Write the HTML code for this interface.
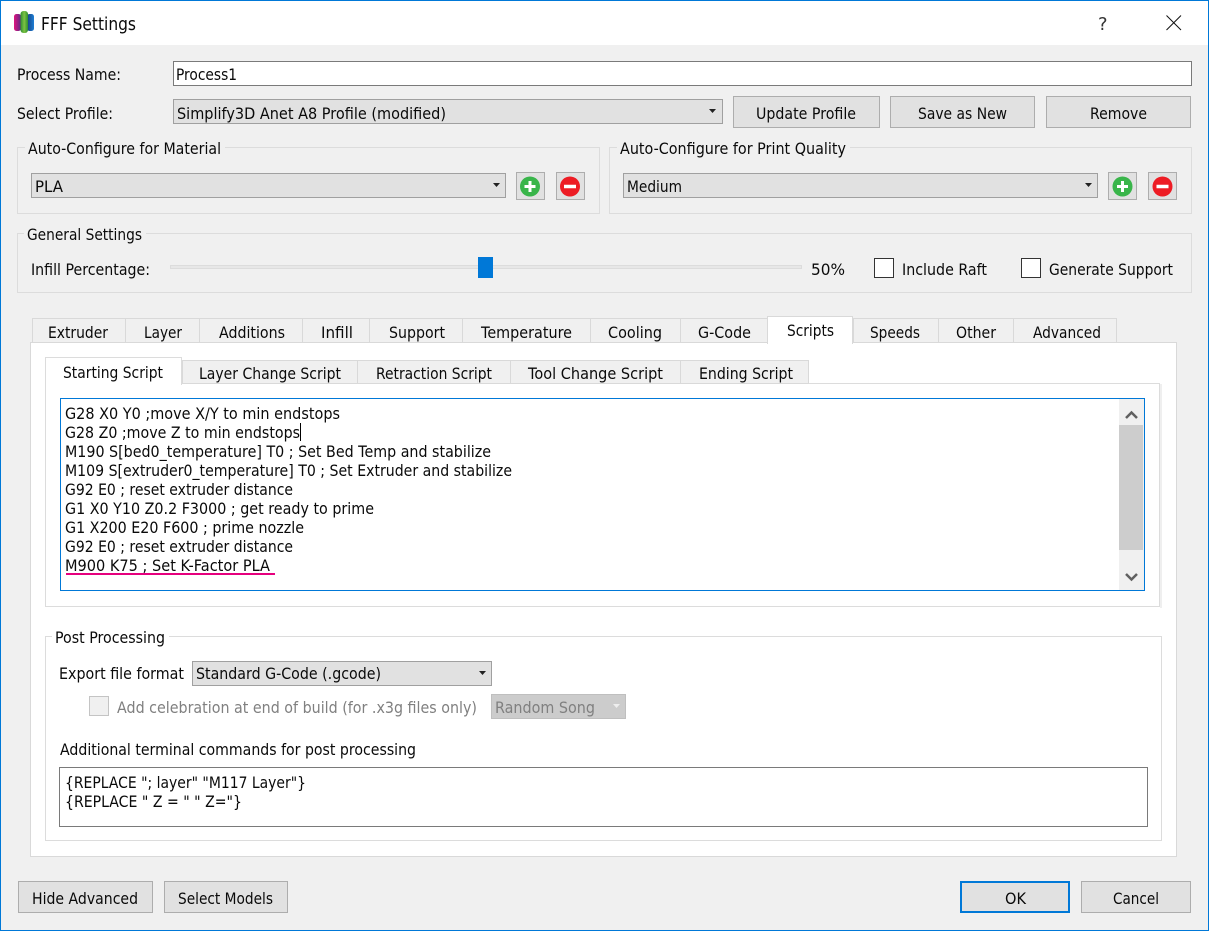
<!DOCTYPE html>
<html><head><meta charset="utf-8"><title>FFF Settings</title>
<style>
html,body{margin:0;padding:0;background:#f0f0f0;width:1209px;height:931px;overflow:hidden}
svg{display:block}
text{font-family:"DejaVu Sans","Liberation Sans",sans-serif;font-size:16px;fill:#0a0a0a;transform:translateY(1px)}
text.n{transform:none}
.b{fill:#e1e1e1;stroke:#adadad}
.c{fill:#e1e1e1;stroke:#a0a0a0}
.g{fill:none;stroke:#dcdcdc}
.t{fill:#f0f0f0;stroke:#d9d9d9}
.d{fill:#808080}
.r{shape-rendering:crispEdges}
</style></head><body>
<svg xmlns="http://www.w3.org/2000/svg" width="1209" height="931" viewBox="0 0 1209 931">
<defs>
<linearGradient id="lm" x1="0" x2="1" y1="0" y2="0"><stop offset="0" stop-color="#e0147f"/><stop offset="1" stop-color="#5b2a86"/></linearGradient>
<linearGradient id="lg" x1="0" x2="1" y1="0" y2="0"><stop offset="0" stop-color="#2f8f2f"/><stop offset=".5" stop-color="#7cc243"/><stop offset="1" stop-color="#2f8f2f"/></linearGradient>
<linearGradient id="lb" x1="0" x2="1" y1="0" y2="0"><stop offset="0" stop-color="#17407f"/><stop offset="1" stop-color="#1e7fd6"/></linearGradient>
</defs>
<rect width="1209" height="931" fill="#f0f0f0"/>
<rect width="1209" height="45" fill="#fff"/>
<rect x="0.500" y="0.500" width="1208" height="930" fill="none" stroke="#0078d7"/>
<!-- logo -->
<rect x="14" y="14" width="7" height="17" rx="2.500" fill="url(#lm)"/>
<rect x="27" y="14" width="7" height="17" rx="2.500" fill="url(#lb)"/>
<rect x="20.500" y="11" width="7.500" height="22" rx="3" fill="url(#lg)"/>
<text class="n" x="41" y="30" style="font-size:18px" textLength="95" lengthAdjust="spacingAndGlyphs">FFF Settings</text>
<text class="n" x="1098" y="30" style="font-size:18px;fill:#333">?</text>
<path d="M1166.500 15.500L1181 30M1181 15.500L1166.500 30" stroke="#111" stroke-width="1" fill="none"/>

<!-- top rows -->
<text x="17" y="79" textLength="104" lengthAdjust="spacingAndGlyphs">Process Name:</text>
<rect class="r" x="173.500" y="61.500" width="1018" height="24" fill="#fff" stroke="#7a7a7a"/>
<text x="176" y="79" textLength="61" lengthAdjust="spacingAndGlyphs">Process1</text>
<text x="17" y="118" textLength="96" lengthAdjust="spacingAndGlyphs">Select Profile:</text>
<rect class="c r" x="173.500" y="99.500" width="549" height="24"/>
<text x="177" y="118" textLength="269" lengthAdjust="spacingAndGlyphs">Simplify3D Anet A8 Profile (modified)</text>
<path d="M709 109h7l-3.500 4z" fill="#222"/>
<rect class="b r" x="733.500" y="96.500" width="146" height="31"/>
<text x="756" y="118" textLength="100" lengthAdjust="spacingAndGlyphs">Update Profile</text>
<rect class="b r" x="890.500" y="96.500" width="144" height="31"/>
<text x="918" y="118" textLength="89" lengthAdjust="spacingAndGlyphs">Save as New</text>
<rect class="b r" x="1046.500" y="96.500" width="144" height="31"/>
<text x="1090" y="118" textLength="57" lengthAdjust="spacingAndGlyphs">Remove</text>

<!-- material group -->
<rect class="g r" x="17.500" y="147.500" width="582" height="66"/>
<rect x="25" y="140" width="200" height="14" fill="#f0f0f0"/>
<text x="28" y="153" textLength="193" lengthAdjust="spacingAndGlyphs">Auto-Configure for Material</text>
<rect class="c r" x="31.500" y="173.500" width="474" height="24"/>
<text x="35" y="191" textLength="28" lengthAdjust="spacingAndGlyphs">PLA</text>
<path d="M493 183h7l-3.500 4z" fill="#222"/>
<rect class="b r" x="516.500" y="172.500" width="28" height="27"/>
<circle cx="530" cy="186.500" r="10" fill="#39b54a"/>
<path d="M530 181v11M524.500 186.500h11" stroke="#fff" stroke-width="3"/>
<rect class="b r" x="556.500" y="172.500" width="28" height="27"/>
<circle cx="570" cy="186.500" r="10" fill="#ed1c24"/>
<path d="M564 186.500h12" stroke="#fff" stroke-width="3.500"/>

<!-- quality group -->
<rect class="g r" x="609.500" y="147.500" width="582" height="66"/>
<rect x="617" y="140" width="233" height="14" fill="#f0f0f0"/>
<text x="620" y="153" textLength="226" lengthAdjust="spacingAndGlyphs">Auto-Configure for Print Quality</text>
<rect class="c r" x="623.500" y="173.500" width="474" height="24"/>
<text x="627" y="191" textLength="55" lengthAdjust="spacingAndGlyphs">Medium</text>
<path d="M1085 183h7l-3.500 4z" fill="#222"/>
<rect class="b r" x="1108.500" y="172.500" width="28" height="27"/>
<circle cx="1122.500" cy="186.500" r="10" fill="#39b54a"/>
<path d="M1122.500 181v11M1117 186.500h11" stroke="#fff" stroke-width="3"/>
<rect class="b r" x="1148.500" y="172.500" width="28" height="27"/>
<circle cx="1162.500" cy="186.500" r="10" fill="#ed1c24"/>
<path d="M1156.500 186.500h12" stroke="#fff" stroke-width="3.500"/>

<!-- general settings -->
<rect class="g r" x="17.500" y="233.500" width="1174" height="59"/>
<rect x="24" y="226" width="122" height="14" fill="#f0f0f0"/>
<text x="27" y="239" textLength="115" lengthAdjust="spacingAndGlyphs">General Settings</text>
<text x="31" y="274" textLength="119" lengthAdjust="spacingAndGlyphs">Infill Percentage:</text>
<rect class="r" x="170.500" y="265.500" width="631" height="3" fill="#e7e7e7" stroke="#dcdcdc"/>
<rect class="r" x="478" y="257" width="15" height="21" fill="#0078d7"/>
<text x="811" y="274" textLength="34" lengthAdjust="spacingAndGlyphs">50%</text>
<rect class="r" x="874.500" y="258.500" width="19" height="19" fill="#fff" stroke="#333"/>
<text x="902" y="274" textLength="85" lengthAdjust="spacingAndGlyphs">Include Raft</text>
<rect class="r" x="1021.500" y="258.500" width="19" height="19" fill="#fff" stroke="#333"/>
<text x="1049" y="274" textLength="124" lengthAdjust="spacingAndGlyphs">Generate Support</text>

<!-- main tabs -->
<rect class="r" x="30.500" y="342.500" width="1146" height="514" fill="#fff" stroke="#d9d9d9"/>
<rect class="t r" x="32.500" y="318.500" width="93" height="24"/>
<rect class="t r" x="125.500" y="318.500" width="74" height="24"/>
<rect class="t r" x="199.500" y="318.500" width="103" height="24"/>
<rect class="t r" x="302.500" y="318.500" width="67" height="24"/>
<rect class="t r" x="369.500" y="318.500" width="93" height="24"/>
<rect class="t r" x="462.500" y="318.500" width="128" height="24"/>
<rect class="t r" x="590.500" y="318.500" width="90" height="24"/>
<rect class="t r" x="680.500" y="318.500" width="87" height="24"/>
<rect class="t r" x="853.500" y="318.500" width="85" height="24"/>
<rect class="t r" x="938.500" y="318.500" width="75" height="24"/>
<rect class="t r" x="1013.500" y="318.500" width="103" height="24"/>
<rect class="r" x="767.500" y="316.500" width="85" height="27" fill="#fff" stroke="#d9d9d9"/>
<rect class="r" x="768" y="341" width="84" height="4" fill="#fff"/>
<text x="48" y="337" textLength="60" lengthAdjust="spacingAndGlyphs">Extruder</text>
<text x="144" y="337" textLength="38" lengthAdjust="spacingAndGlyphs">Layer</text>
<text x="219" y="337" textLength="66" lengthAdjust="spacingAndGlyphs">Additions</text>
<text x="321" y="337" textLength="32" lengthAdjust="spacingAndGlyphs">Infill</text>
<text x="389" y="337" textLength="56" lengthAdjust="spacingAndGlyphs">Support</text>
<text x="481" y="337" textLength="91" lengthAdjust="spacingAndGlyphs">Temperature</text>
<text x="608" y="337" textLength="54" lengthAdjust="spacingAndGlyphs">Cooling</text>
<text x="698" y="337" textLength="53" lengthAdjust="spacingAndGlyphs">G-Code</text>
<text x="787" y="335" textLength="47" lengthAdjust="spacingAndGlyphs">Scripts</text>
<text x="870" y="337" textLength="50" lengthAdjust="spacingAndGlyphs">Speeds</text>
<text x="956" y="337" textLength="40" lengthAdjust="spacingAndGlyphs">Other</text>
<text x="1033" y="337" textLength="68" lengthAdjust="spacingAndGlyphs">Advanced</text>

<!-- inner pane -->
<rect class="r" x="1160" y="384" width="2" height="224" fill="#efefef"/>
<rect class="r" x="45.500" y="383.500" width="1114" height="223" fill="#fff" stroke="#dcdcdc"/>
<rect class="t r" x="182.500" y="360.500" width="175" height="23"/>
<rect class="t r" x="357.500" y="360.500" width="153" height="23"/>
<rect class="t r" x="510.500" y="360.500" width="170" height="23"/>
<rect class="t r" x="680.500" y="360.500" width="128" height="23"/>
<rect class="r" x="45.500" y="357.500" width="136" height="27" fill="#fff" stroke="#dcdcdc"/>
<rect class="r" x="46" y="383" width="135" height="3" fill="#fff"/>
<text x="63" y="377" textLength="100" lengthAdjust="spacingAndGlyphs">Starting Script</text>
<text x="199" y="378" textLength="142" lengthAdjust="spacingAndGlyphs">Layer Change Script</text>
<text x="376" y="378" textLength="116" lengthAdjust="spacingAndGlyphs">Retraction Script</text>
<text x="528" y="378" textLength="135" lengthAdjust="spacingAndGlyphs">Tool Change Script</text>
<text x="699" y="378" textLength="94" lengthAdjust="spacingAndGlyphs">Ending Script</text>

<!-- script editor -->
<rect class="r" x="60.500" y="398.500" width="1084" height="192" fill="#fff" stroke="#0078d7"/>
<rect class="r" x="1119" y="399" width="25" height="191" fill="#f0f0f0"/>
<rect class="r" x="1119" y="425" width="24" height="125" fill="#cdcdcd"/>
<path d="M1126 418l5.500-5.500 5.500 5.500" fill="none" stroke="#606060" stroke-width="2.500"/>
<path d="M1126 574l5.500 5.500 5.500-5.500" fill="none" stroke="#606060" stroke-width="2.500"/>
<text x="65" y="418" textLength="275" lengthAdjust="spacingAndGlyphs">G28 X0 Y0 ;move X/Y to min endstops</text>
<text x="65" y="437" textLength="235" lengthAdjust="spacingAndGlyphs">G28 Z0 ;move Z to min endstops</text>
<rect class="r" x="300" y="423" width="1" height="18" fill="#000"/>
<text x="65" y="456" textLength="426" lengthAdjust="spacingAndGlyphs">M190 S[bed0_temperature] T0 ; Set Bed Temp and stabilize</text>
<text x="65" y="475" textLength="447" lengthAdjust="spacingAndGlyphs">M109 S[extruder0_temperature] T0 ; Set Extruder and stabilize</text>
<text x="65" y="494" textLength="228" lengthAdjust="spacingAndGlyphs">G92 E0 ; reset extruder distance</text>
<text x="65" y="513" textLength="309" lengthAdjust="spacingAndGlyphs">G1 X0 Y10 Z0.2 F3000 ; get ready to prime</text>
<text x="65" y="532" textLength="239" lengthAdjust="spacingAndGlyphs">G1 X200 E20 F600 ; prime nozzle</text>
<text x="65" y="551" textLength="228" lengthAdjust="spacingAndGlyphs">G92 E0 ; reset extruder distance</text>
<text x="65" y="570" textLength="205" lengthAdjust="spacingAndGlyphs">M900 K75 ; Set K-Factor PLA</text>
<rect class="r" x="66" y="573" width="209" height="2" fill="#e6007e"/>

<!-- post processing -->
<rect class="g r" x="45.500" y="636.500" width="1116" height="204"/>
<rect x="52" y="629" width="117" height="14" fill="#fff"/>
<text x="55" y="642" textLength="110" lengthAdjust="spacingAndGlyphs">Post Processing</text>
<text x="59" y="678" textLength="125" lengthAdjust="spacingAndGlyphs">Export file format</text>
<rect class="c r" x="192.500" y="661.500" width="299" height="24"/>
<text x="196" y="678" textLength="185" lengthAdjust="spacingAndGlyphs">Standard G-Code (.gcode)</text>
<path d="M479 671h7l-3.500 4z" fill="#222"/>
<rect class="r" x="89.500" y="696.500" width="19" height="19" fill="#f0f0f0" stroke="#c4c4c4"/>
<text class="d" x="117" y="712" textLength="360" lengthAdjust="spacingAndGlyphs">Add celebration at end of build (for .x3g files only)</text>
<rect class="r" x="491.500" y="694.500" width="134" height="24" fill="#cccccc" stroke="#bfbfbf"/>
<text class="d" x="495" y="712" textLength="100" lengthAdjust="spacingAndGlyphs">Random Song</text>
<path d="M613 704h7l-3.500 4z" fill="#eee"/>
<text x="60" y="754" textLength="356" lengthAdjust="spacingAndGlyphs">Additional terminal commands for post processing</text>
<rect class="r" x="59.500" y="767.500" width="1088" height="59" fill="#fff" stroke="#7a7a7a"/>
<text x="65" y="787" textLength="241" lengthAdjust="spacingAndGlyphs">{REPLACE "; layer" "M117 Layer"}</text>
<text x="65" y="806" textLength="177" lengthAdjust="spacingAndGlyphs">{REPLACE " Z = " " Z="}</text>

<!-- footer -->
<rect class="b r" x="18.500" y="881.500" width="134" height="31"/>
<text x="32" y="903" textLength="106" lengthAdjust="spacingAndGlyphs">Hide Advanced</text>
<rect class="b r" x="164.500" y="881.500" width="123" height="31"/>
<text x="178" y="903" textLength="95" lengthAdjust="spacingAndGlyphs">Select Models</text>
<rect class="r" x="961" y="882" width="108" height="30" fill="#e1e1e1" stroke="#0078d7" stroke-width="2"/>
<text x="1005" y="903" textLength="21" lengthAdjust="spacingAndGlyphs">OK</text>
<rect class="b r" x="1081.500" y="881.500" width="109" height="31"/>
<text x="1113" y="903" textLength="46" lengthAdjust="spacingAndGlyphs">Cancel</text>
</svg>
</body></html>
